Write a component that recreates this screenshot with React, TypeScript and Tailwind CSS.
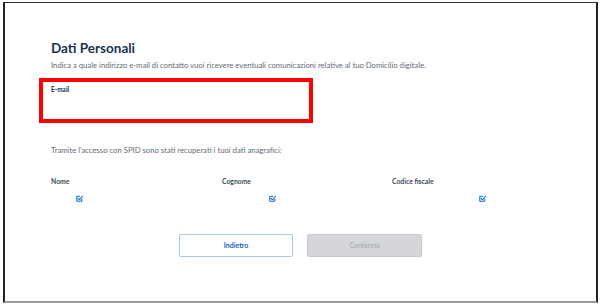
function EditIcon() {
  return (
    <svg width="7" height="7" viewBox="0 0 14 14" fill="none">
      <path
        d="M11.5 8v3a1.5 1.5 0 0 1-1.5 1.5H3A1.5 1.5 0 0 1 1.5 11V4A1.5 1.5 0 0 1 3 2.5h4.5"
        stroke="#0b6ee0"
        strokeWidth="2.2"
        strokeLinecap="round"
      />
      <path d="M4.5 7l2.5 2.5 6-7" stroke="#0b6ee0" strokeWidth="2.2" strokeLinecap="round" strokeLinejoin="round" />
    </svg>
  );
}

const fields = [
  { label: "Nome", iconPad: "pl-[25px]" },
  { label: "Cognome", iconPad: "pl-[47px]" },
  { label: "Codice fiscale", iconPad: "pl-[87px]" },
];

export default function App() {
  return (
    <div className="h-[304px] w-[600px] bg-white pl-[3px] pt-[2px] font-['Lato',sans-serif]">
      <div className="h-[301px] w-[595px] border-t border-l-2 border-r-2 border-b-2 border-t-[#333] border-l-[#222] border-r-[#222] border-b-[#9a9a9a]">
        <div className="pl-[46px] pt-[37px]">
          <h1 className="text-[13.5px] font-bold leading-[16px] text-[#17324d]">Dati Personali</h1>
          <p className="mt-[4px] text-[7.7px] leading-[10px] text-[#5f6b77]">
            Indica a quale indirizzo e-mail di contatto vuoi ricevere eventuali comunicazioni relative al tuo Domicilio digitale.
          </p>
          <div className="-ml-[12px] mt-[8px] h-[45px] w-[274px] border-[4px] border-[#ff0000] pl-[8px] pt-[4px]">
            <label className="block text-[6.5px] font-bold leading-[8px] text-[#17324d]">E-mail</label>
          </div>
          <p className="mt-[22px] text-[7.7px] leading-[10px] text-[#5f6b77]">
            Tramite l&apos;accesso con SPID sono stati recuperati i tuoi dati anagrafici:
          </p>
          <div className="mt-[22px] grid w-[512px] grid-cols-[171px_170px_171px]">
            {fields.map((f) => (
              <div key={f.label}>
                <p className="text-[6.8px] font-bold leading-[8px] text-[#3d4955]">{f.label}</p>
                <div className={`mt-[10px] flex ${f.iconPad}`}>
                  <EditIcon />
                </div>
              </div>
            ))}
          </div>
          <div className="mt-[32px] flex gap-[14px] pl-[128px]">
            <button className="h-[23px] w-[114px] rounded-[2px] border border-[#a9c9f2] bg-white text-[7px] font-bold text-[#0d5fc4]">
              Indietro
            </button>
            <button className="h-[23px] w-[115px] rounded-[2px] border border-[#c8cacf] bg-[#d4d6da] text-[7px] text-[#a2a6ab]">
              Conferma
            </button>
          </div>
        </div>
      </div>
    </div>
  );
}
